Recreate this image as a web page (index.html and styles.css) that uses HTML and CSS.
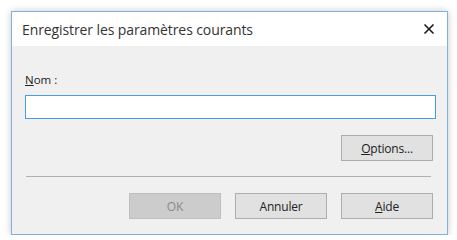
FILE: index.html
```html
<!DOCTYPE html>
<html>
<head>
    <meta name="viewport" content="width=device-width, initial-scale=1.0">
    <title>Enregistrer les paramètres courants</title>
    <link rel="stylesheet" href="styles.css">
</head>
<body>
    <div class="dialog">
        <div class="title-bar">
            <span class="title">Enregistrer les paramètres courants</span>
            <button class="close-btn" aria-label="Fermer">
                <svg width="12" height="12" viewBox="0 0 12 12">
                    <path d="M1.5 1.5 L10.5 10.5 M10.5 1.5 L1.5 10.5" stroke="#1a1a1a" stroke-width="1.6" fill="none"/>
                </svg>
            </button>
        </div>

        <div class="dialog-body">
            <label class="field-label" for="name"><u>N</u>om :</label>
            <input class="text-input" id="name" type="text">

            <div class="options-row">
                <button class="btn"><u>O</u>ptions...</button>
            </div>

            <div class="separator"></div>

            <div class="button-row">
                <button class="btn btn-disabled" disabled>OK</button>
                <button class="btn">Annuler</button>
                <button class="btn"><u>A</u>ide</button>
            </div>
        </div>
    </div>
</body>
</html>
```

FILE: styles.css
```css
body {
    font-family: 'Open Sans', 'Noto Sans', sans-serif;
    margin: 0;
    padding: 0;
    background: #ffffff;
}

.dialog {
    margin: 11px 0 0 11px;
    width: 435px;
    border: 1px solid #7fb2e0;
    box-shadow: 0 0 7px rgba(0,0,0,0.22);
    display: flex;
    flex-direction: column;
}

.title-bar {
    height: 34px;
    background: #ffffff;
    display: flex;
    align-items: center;
    justify-content: space-between;
    padding: 0 11px 0 10px;
}

.title {
    font-size: 14px;
    color: #333333;
    letter-spacing: -0.1px;
}

.close-btn {
    background: none;
    border: none;
    padding: 0;
    width: 14px;
    height: 14px;
    display: flex;
    align-items: center;
    justify-content: center;
}

.dialog-body {
    background: #f0f0f0;
    padding: 26px 11px 15px 13px;
    display: flex;
    flex-direction: column;
}

.field-label {
    font-size: 11.5px;
    line-height: 16px;
    color: #222222;
}

.text-input {
    margin-top: 7px;
    height: 24px;
    box-sizing: border-box;
    border: 1px solid #4b9be0;
    background: #ffffff;
    outline: none;
    width: 100%;
}

.options-row, .button-row {
    display: flex;
    justify-content: flex-end;
    gap: 14px;
    padding-right: 3px;
}

.options-row {
    margin-top: 16px;
}

.separator {
    margin: 15px 5px 0 1px;
    height: 1px;
    background: #b0b0b0;
}

.button-row {
    margin-top: 16px;
}

.btn {
    width: 92px;
    height: 26px;
    box-sizing: border-box;
    background: #e1e1e1;
    border: 1px solid #adadad;
    font-family: 'Open Sans', 'Noto Sans', sans-serif;
    font-size: 12px;
    letter-spacing: -0.2px;
    color: #222222;
    padding: 0;
}

.btn-disabled {
    background: #cccccc;
    border-color: #bfbfbf;
    color: #8a8a8a;
}
```
